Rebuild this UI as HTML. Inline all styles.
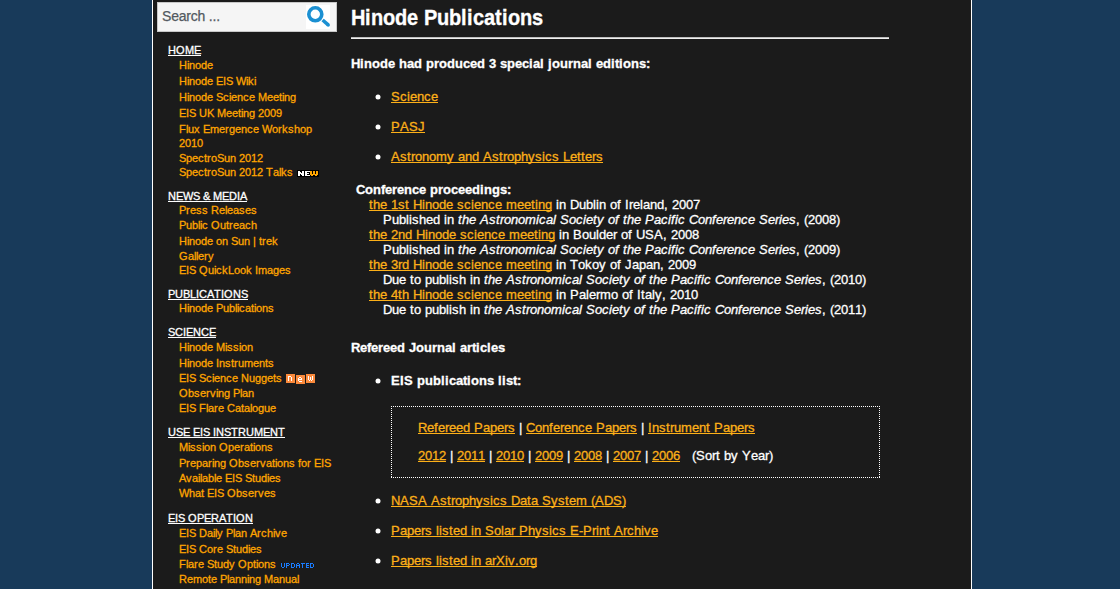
<!DOCTYPE html>
<html><head><meta charset="utf-8">
<title>Hinode Publications</title>
<style>
html,body{margin:0;padding:0;}
body{width:1120px;height:589px;overflow:hidden;background:#183a5a;position:relative;font-family:"Liberation Sans",sans-serif;}
#wrap{position:absolute;left:152px;top:0;width:818px;height:589px;background:#1b1b1b;border-left:1px solid #fff;border-right:1px solid #fff;}
.abs{position:absolute;}
#search{position:absolute;left:157px;top:2px;width:178px;height:28px;background:#f5f5f5;border:1px solid #c8c8c8;}
#search .ph{position:absolute;left:4px;top:5px;font-size:14px;color:#525960;line-height:16px;white-space:nowrap;letter-spacing:-0.2px;-webkit-text-stroke:0.25px #525960;}
#sicon{position:absolute;left:148px;top:2px;width:24px;height:24px;background:#fff;}
.bul{position:absolute;width:6px;height:6px;border-radius:50%;background:#fff;left:375px;}
#hr{position:absolute;left:351px;top:37px;width:538px;height:1px;background:#bdbdbd;border-bottom:1px solid #efefef;}
#box{position:absolute;left:391px;top:406px;width:487px;height:70px;border:1px dotted #fff;}
#txt{position:absolute;left:0;top:0;}
#txt text{font-family:"Liberation Sans",sans-serif;white-space:pre;stroke-width:0.3px;}
#txt .b{font-weight:bold;}
#txt .i{font-style:italic;}
</style></head>
<body>
<div id="wrap"></div>
<div id="search"><div class="ph">Search ...</div>
<div id="sicon"><svg width="24" height="24" viewBox="0 0 24 24"><circle cx="9.3" cy="9.3" r="6.5" fill="none" stroke="#1b90d2" stroke-width="3.6"/><line x1="16.6" y1="15.0" x2="22.2" y2="19.9" stroke="#1b90d2" stroke-width="3.5" stroke-linecap="butt"/><circle cx="22.2" cy="19.9" r="1.75" fill="#1b90d2"/></svg></div>
</div>
<div id="hr"></div>

<svg class="abs" style="left:0;top:0" width="1120" height="589"><g fill="#fff"><circle cx="378" cy="97" r="2.5"/><circle cx="378" cy="127" r="2.5"/><circle cx="378" cy="157" r="2.5"/><circle cx="378" cy="381" r="2.5"/><circle cx="378" cy="501" r="2.5"/><circle cx="378" cy="531" r="2.5"/><circle cx="378" cy="561" r="2.5"/></g></svg>
<svg class="abs" style="left:0;top:0" width="1120" height="589"><g stroke="#fff" stroke-width="1" stroke-dasharray="1 1" fill="none">
<line x1="391" y1="406.5" x2="880" y2="406.5"/><line x1="391" y1="477.5" x2="880" y2="477.5"/>
<line x1="391.5" y1="406" x2="391.5" y2="477"/><line x1="879.5" y1="406" x2="879.5" y2="477"/></g></svg>

<svg class="abs" style="left:297px;top:170px" width="22" height="7" viewBox="0 0 22 7">
<rect x="0" y="0" width="22" height="7" fill="#000"/>
<path fill="#fff" d="M1 1h2v1h1v1h1v-2h2v5h-2v-1h-1v-1h-1v2h-2z"/>
<path fill="#fff" d="M8 1h5v1h-3v1h2v1h-2v1h3v1h-5z"/>
<path fill="#ffa500" d="M13 1h2v3h-2zM16 1h2v3h-2zM19 1h2v3h-2zM13 4h8v1h-8zM14 5h2v1h-2zM18 5h2v1h-2z"/>
</svg>
<svg class="abs" style="left:286px;top:374px" width="29" height="10" viewBox="0 0 29 10">
<g fill="#fb8a3c"><rect x="0" y="0" width="9" height="9"/><rect x="10" y="1" width="9" height="9"/><rect x="20" y="0" width="9" height="9"/></g>
<g fill="#fff">
<rect x="2" y="2" width="3" height="1"/><rect x="2" y="3" width="1" height="4"/><rect x="5" y="3" width="1" height="4"/>
<rect x="13" y="3" width="2" height="1"/><rect x="12" y="4" width="1" height="1"/><rect x="15" y="4" width="1" height="1"/><rect x="12" y="5" width="4" height="1"/><rect x="12" y="6" width="1" height="1"/><rect x="13" y="7" width="3" height="1"/>
<rect x="22" y="2" width="1" height="4"/><rect x="26" y="2" width="1" height="4"/><rect x="24" y="3" width="1" height="3"/><rect x="23" y="6" width="1" height="1"/><rect x="25" y="6" width="1" height="1"/>
</g></svg>
<svg class="abs" style="left:281px;top:563px" width="33" height="5" viewBox="0 0 33 5">
<g fill="#1a7cff">
<path d="M0 0h1v4h-1zM3 0h1v4h-1zM1 4h2v1h-2z"/>
<path d="M5 0h3v1h-2v1h2v1h-2v2h-1zM8 1h1v1h-1z"/>
<path d="M10 0h3v1h-2v3h2v1h-3zM13 1h1v3h-1z"/>
<path d="M16 0h2v1h-2zM15 1h1v4h-1zM18 1h1v4h-1zM16 2h2v1h-2z"/>
<path d="M20 0h4v1h-4zM21 1h1v4h-1z"/>
<path d="M25 0h3v1h-2v1h2v1h-2v1h2v1h-3z"/>
<path d="M29 0h3v1h-2v3h2v1h-3zM32 1h1v3h-1z"/>
</g></svg>
<svg id="txt" width="1120" height="589" viewBox="0 0 1120 589">
<rect x="168" y="55" width="33" height="1" fill="#ffffff"/>
<rect x="168" y="201" width="79" height="1" fill="#ffffff"/>
<rect x="168" y="299" width="80" height="1" fill="#ffffff"/>
<rect x="168" y="337" width="48" height="1" fill="#ffffff"/>
<rect x="168" y="437" width="117" height="1" fill="#ffffff"/>
<rect x="168" y="523" width="85" height="1" fill="#ffffff"/>
<rect x="391" y="102" width="47" height="1" fill="#fcb018"/>
<rect x="391" y="132" width="34" height="1" fill="#fcb018"/>
<rect x="391" y="162" width="212" height="1" fill="#fcb018"/>
<rect x="369" y="210" width="183" height="1" fill="#fcb018"/>
<rect x="369" y="240" width="186" height="1" fill="#fcb018"/>
<rect x="369" y="270" width="183" height="1" fill="#fcb018"/>
<rect x="369" y="300" width="183" height="1" fill="#fcb018"/>
<rect x="418" y="433" width="97" height="1" fill="#fcb018"/>
<rect x="526" y="433" width="111" height="1" fill="#fcb018"/>
<rect x="648" y="433" width="107" height="1" fill="#fcb018"/>
<rect x="418" y="461" width="28" height="1" fill="#fcb018"/>
<rect x="457" y="461" width="28" height="1" fill="#fcb018"/>
<rect x="496" y="461" width="28" height="1" fill="#fcb018"/>
<rect x="535" y="461" width="28" height="1" fill="#fcb018"/>
<rect x="574" y="461" width="28" height="1" fill="#fcb018"/>
<rect x="613" y="461" width="28" height="1" fill="#fcb018"/>
<rect x="652" y="461" width="28" height="1" fill="#fcb018"/>
<rect x="391" y="506" width="235" height="1" fill="#fcb018"/>
<rect x="391" y="536" width="267" height="1" fill="#fcb018"/>
<rect x="391" y="566" width="146" height="1" fill="#fcb018"/>
<text class="r" x="168 176 185 194" y="54" font-size="11" fill="#ffffff" stroke="#ffffff">HOME</text>
<text class="r" x="179 187 189 195 201 207" y="69" font-size="11" fill="#ffa500" stroke="#ffa500">Hinode</text>
<text class="r" x="179 187 189 195 201 207 213 216 223 226 233 236 246 248 254" y="85" font-size="11" fill="#ffa500" stroke="#ffa500">Hinode&#160;EIS&#160;Wiki</text>
<text class="r" x="179 187 189 195 201 207 213 216 223 229 231 237 243 249 255 258 267 273 279 282 284 290" y="101" font-size="11" fill="#ffa500" stroke="#ffa500">Hinode&#160;Science&#160;Meeting</text>
<text class="r" x="179 186 189 196 199 207 214 217 226 232 238 241 243 249 255 258 264 270 276" y="117" font-size="11" fill="#ffa500" stroke="#ffa500">EIS&#160;UK&#160;Meeting&#160;2009</text>
<text class="r" x="179 186 188 194 200 203 210 219 225 229 235 241 247 253 259 262 272 278 282 288 294 300 306" y="133" font-size="11" fill="#ffa500" stroke="#ffa500">Flux&#160;Emergence&#160;Workshop</text>
<text class="r" x="179 185 191 197" y="147" font-size="11" fill="#ffa500" stroke="#ffa500">2010</text>
<text class="r" x="179 186 192 198 204 207 211 217 224 230 236 239 245 251 257" y="162" font-size="11" fill="#ffa500" stroke="#ffa500">SpectroSun&#160;2012</text>
<text class="r" x="179 186 192 198 204 207 211 217 224 230 236 239 245 251 257 263 266 273 279 281 287" y="176" font-size="11" fill="#ffa500" stroke="#ffa500">SpectroSun&#160;2012&#160;Talks</text>
<text class="r" x="168 176 183 193 200 203 210 213 222 229 237 240" y="200" font-size="11" fill="#ffffff" stroke="#ffffff">NEWS&#160;&amp;&#160;MEDIA</text>
<text class="r" x="179 186 190 196 202 208 211 219 225 227 233 239 245 251" y="214" font-size="11" fill="#ffa500" stroke="#ffa500">Press&#160;Releases</text>
<text class="r" x="179 186 192 198 200 202 208 211 220 226 229 233 239 245 251" y="229" font-size="11" fill="#ffa500" stroke="#ffa500">Public&#160;Outreach</text>
<text class="r" x="179 187 189 195 201 207 213 216 222 228 231 238 244 250 253 256 259 262 266 272" y="245" font-size="11" fill="#ffa500" stroke="#ffa500">Hinode&#160;on&#160;Sun&#160;|&#160;trek</text>
<text class="r" x="179 188 194 196 198 204 208" y="260" font-size="11" fill="#ffa500" stroke="#ffa500">Gallery</text>
<text class="r" x="179 186 189 196 199 208 214 216 222 228 234 240 246 252 255 258 267 273 279 285" y="274" font-size="11" fill="#ffa500" stroke="#ffa500">EIS&#160;QuickLook&#160;Images</text>
<text class="r" x="168 175 183 190 196 199 207 214 221 224 233 241" y="298" font-size="11" fill="#ffffff" stroke="#ffffff">PUBLICATIONS</text>
<text class="r" x="179 187 189 195 201 207 213 216 223 229 235 237 239 245 251 254 256 262 268" y="312" font-size="11" fill="#ffa500" stroke="#ffa500">Hinode&#160;Publications</text>
<text class="r" x="168 175 183 186 193 201 209" y="336" font-size="11" fill="#ffffff" stroke="#ffffff">SCIENCE</text>
<text class="r" x="179 187 189 195 201 207 213 216 225 227 233 239 241 247" y="351" font-size="11" fill="#ffa500" stroke="#ffa500">Hinode&#160;Mission</text>
<text class="r" x="179 187 189 195 201 207 213 216 219 225 231 234 238 244 253 259 265 268" y="367" font-size="11" fill="#ffa500" stroke="#ffa500">Hinode&#160;Instruments</text>
<text class="r" x="179 186 189 196 199 206 212 214 220 226 232 238 241 249 255 261 267 273 276" y="382" font-size="11" fill="#ffa500" stroke="#ffa500">EIS&#160;Science&#160;Nuggets</text>
<text class="r" x="179 188 194 200 206 210 216 218 224 230 233 240 242 248" y="397" font-size="11" fill="#ffa500" stroke="#ffa500">Observing&#160;Plan</text>
<text class="r" x="179 186 189 196 199 206 208 214 218 224 227 235 241 244 250 252 258 264 270" y="412" font-size="11" fill="#ffa500" stroke="#ffa500">EIS&#160;Flare&#160;Catalogue</text>
<text class="r" x="168 176 183 190 193 200 203 210 213 216 224 231 238 246 254 263 270 278" y="436" font-size="11" fill="#ffffff" stroke="#ffffff">USE&#160;EIS&#160;INSTRUMENT</text>
<text class="r" x="179 188 190 196 202 204 210 216 219 228 234 240 244 250 253 255 261 267" y="451" font-size="11" fill="#ffa500" stroke="#ffa500">Mission&#160;Operations</text>
<text class="r" x="179 186 190 196 202 208 212 214 220 226 229 238 244 250 256 260 266 272 275 277 283 289 295 298 301 307 311 314 321 324" y="467" font-size="11" fill="#ffa500" stroke="#ffa500">Preparing&#160;Observations&#160;for&#160;EIS</text>
<text class="r" x="179 186 192 198 200 202 208 214 216 222 225 232 235 242 245 252 255 261 267 269 275" y="482" font-size="11" fill="#ffa500" stroke="#ffa500">Available&#160;EIS&#160;Studies</text>
<text class="r" x="179 189 195 201 204 207 214 217 224 227 236 242 248 254 258 264 270" y="497" font-size="11" fill="#ffa500" stroke="#ffa500">What&#160;EIS&#160;Observes</text>
<text class="r" x="168 175 178 185 188 197 204 211 219 226 233 236 245" y="522" font-size="11" fill="#ffffff" stroke="#ffffff">EIS&#160;OPERATION</text>
<text class="r" x="179 186 189 196 199 207 213 215 217 223 226 233 235 241 247 250 257 261 267 273 275 281" y="537" font-size="11" fill="#ffa500" stroke="#ffa500">EIS&#160;Daily&#160;Plan&#160;Archive</text>
<text class="r" x="179 186 189 196 199 207 213 217 223 226 233 236 242 248 250 256" y="553" font-size="11" fill="#ffa500" stroke="#ffa500">EIS&#160;Core&#160;Studies</text>
<text class="r" x="179 186 188 194 198 204 207 214 217 223 229 235 238 247 253 256 258 264 270" y="568" font-size="11" fill="#ffa500" stroke="#ffa500">Flare&#160;Study&#160;Options</text>
<text class="r" x="179 187 193 202 208 211 217 220 227 229 235 241 247 249 255 261 264 273 279 285 291 297" y="583" font-size="11" fill="#ffa500" stroke="#ffa500">Remote&#160;Planning&#160;Manual</text>
<text class="b" x="351 365 371 383 395 407 418 424 437 449 461 467 473 484 495 502 508 520 532" y="25" font-size="20" fill="#ffffff" stroke="#ffffff" transform="matrix(1 0 0 1.07 0 -1.75)">Hinode&#160;Publications</text>
<text class="b" x="351 360 364 372 380 388 395 399 407 414 422 426 434 439 447 455 463 470 477 485 489 496 500 507 515 522 529 533 540 544 548 552 560 568 573 581 588 592 596 603 611 615 619 623 631 639 646" y="68" font-size="13" fill="#ffffff" stroke="#ffffff">Hinode&#160;had&#160;produced&#160;3&#160;special&#160;journal&#160;editions:</text>
<text class="r" x="391 400 407 410 417 424 431" y="101" font-size="13" fill="#fcb018" stroke="#fcb018">Science</text>
<text class="r" x="391 400 409 418" y="131" font-size="13" fill="#fcb018" stroke="#fcb018">PASJ</text>
<text class="r" x="391 400 407 411 415 422 429 436 447 454 458 465 472 479 483 492 499 503 507 514 521 528 535 542 545 552 559 563 570 577 581 585 592 596" y="161" font-size="13" fill="#fcb018" stroke="#fcb018">Astronomy&#160;and&#160;Astrophysics&#160;Letters</text>
<text class="b" x="356 365 373 381 385 392 397 404 412 419 426 430 438 443 451 458 465 472 480 484 492 500 507" y="194" font-size="13" fill="#ffffff" stroke="#ffffff">Conference&#160;proceedings:</text>
<text class="r" x="369 373 380 387 391 398 405 409 413 422 425 432 439 446 453 457 464 471 474 481 488 495 502 506 517 524 531 535 538 545" y="209" font-size="13" fill="#fcb018" stroke="#fcb018">the&#160;1st&#160;Hinode&#160;science&#160;meeting</text>
<text class="r" x="552 556 559 566 570 579 586 593 596 599 606 610 617 621 625 629 633 640 643 650 657 664 668 672 679 686 693" y="209" font-size="13" fill="#ffffff" stroke="#ffffff">&#160;in&#160;Dublin&#160;of&#160;Ireland,&#160;2007</text>
<text class="r" x="383 392 399 406 409 412 419 426 433 440 444 447 454" y="224" font-size="13" fill="#ffffff" stroke="#ffffff">Published&#160;in&#160;</text>
<text class="i" x="458 462 469 476 480 489 496 500 504 511 518 525 536 539 546 553 556 560 569 576 583 586 593 597 604 608 615 619 623 627 634 641 645 654 661 668 671 675 678 685 689 698 705 712 716 723 727 734 741 748 755 759 768 775 779 782 789" y="224" font-size="13" fill="#ffffff" stroke="#ffffff">the&#160;Astronomical&#160;Society&#160;of&#160;the&#160;Pacific&#160;Conference&#160;Series</text>
<text class="r" x="796 800 804 808 815 822 829 836" y="224" font-size="13" fill="#ffffff" stroke="#ffffff">,&#160;(2008)</text>
<text class="r" x="369 373 380 387 391 398 405 412 416 425 428 435 442 449 456 460 467 474 477 484 491 498 505 509 520 527 534 538 541 548" y="239" font-size="13" fill="#fcb018" stroke="#fcb018">the&#160;2nd&#160;Hinode&#160;science&#160;meeting</text>
<text class="r" x="555 559 562 569 573 582 589 596 599 606 613 617 621 628 632 636 645 654 663 667 671 678 685 692" y="239" font-size="13" fill="#ffffff" stroke="#ffffff">&#160;in&#160;Boulder&#160;of&#160;USA,&#160;2008</text>
<text class="r" x="383 392 399 406 409 412 419 426 433 440 444 447 454" y="254" font-size="13" fill="#ffffff" stroke="#ffffff">Published&#160;in&#160;</text>
<text class="i" x="458 462 469 476 480 489 496 500 504 511 518 525 536 539 546 553 556 560 569 576 583 586 593 597 604 608 615 619 623 627 634 641 645 654 661 668 671 675 678 685 689 698 705 712 716 723 727 734 741 748 755 759 768 775 779 782 789" y="254" font-size="13" fill="#ffffff" stroke="#ffffff">the&#160;Astronomical&#160;Society&#160;of&#160;the&#160;Pacific&#160;Conference&#160;Series</text>
<text class="r" x="796 800 804 808 815 822 829 836" y="254" font-size="13" fill="#ffffff" stroke="#ffffff">,&#160;(2009)</text>
<text class="r" x="369 373 380 387 391 398 402 409 413 422 425 432 439 446 453 457 464 471 474 481 488 495 502 506 517 524 531 535 538 545" y="269" font-size="13" fill="#fcb018" stroke="#fcb018">the&#160;3rd&#160;Hinode&#160;science&#160;meeting</text>
<text class="r" x="552 556 559 566 570 578 585 592 599 606 610 617 621 625 632 639 646 653 660 664 668 675 682 689" y="269" font-size="13" fill="#ffffff" stroke="#ffffff">&#160;in&#160;Tokoy&#160;of&#160;Japan,&#160;2009</text>
<text class="r" x="383 392 399 406 410 414 421 425 432 439 446 449 452 459 466 470 473 480" y="284" font-size="13" fill="#ffffff" stroke="#ffffff">Due&#160;to&#160;publish&#160;in&#160;</text>
<text class="i" x="484 488 495 502 506 515 522 526 530 537 544 551 562 565 572 579 582 586 595 602 609 612 619 623 630 634 641 645 649 653 660 667 671 680 687 694 697 701 704 711 715 724 731 738 742 749 753 760 767 774 781 785 794 801 805 808 815" y="284" font-size="13" fill="#ffffff" stroke="#ffffff">the&#160;Astronomical&#160;Society&#160;of&#160;the&#160;Pacific&#160;Conference&#160;Series</text>
<text class="r" x="822 826 830 834 841 848 855 862" y="284" font-size="13" fill="#ffffff" stroke="#ffffff">,&#160;(2010)</text>
<text class="r" x="369 373 380 387 391 398 402 409 413 422 425 432 439 446 453 457 464 471 474 481 488 495 502 506 517 524 531 535 538 545" y="299" font-size="13" fill="#fcb018" stroke="#fcb018">the&#160;4th&#160;Hinode&#160;science&#160;meeting</text>
<text class="r" x="552 556 559 566 570 579 586 589 596 600 611 618 622 629 633 637 641 645 652 655 662 666 670 677 684 691" y="299" font-size="13" fill="#ffffff" stroke="#ffffff">&#160;in&#160;Palermo&#160;of&#160;Italy,&#160;2010</text>
<text class="r" x="383 392 399 406 410 414 421 425 432 439 446 449 452 459 466 470 473 480" y="314" font-size="13" fill="#ffffff" stroke="#ffffff">Due&#160;to&#160;publish&#160;in&#160;</text>
<text class="i" x="484 488 495 502 506 515 522 526 530 537 544 551 562 565 572 579 582 586 595 602 609 612 619 623 630 634 641 645 649 653 660 667 671 680 687 694 697 701 704 711 715 724 731 738 742 749 753 760 767 774 781 785 794 801 805 808 815" y="314" font-size="13" fill="#ffffff" stroke="#ffffff">the&#160;Astronomical&#160;Society&#160;of&#160;the&#160;Pacific&#160;Conference&#160;Series</text>
<text class="r" x="822 826 830 834 841 848 855 862" y="314" font-size="13" fill="#ffffff" stroke="#ffffff">,&#160;(2011)</text>
<text class="b" x="351 360 367 371 378 383 390 397 405 409 416 424 432 437 445 452 456 460 467 472 476 480 487 491 498" y="352" font-size="13" fill="#ffffff" stroke="#ffffff">Refereed&#160;Journal&#160;articles</text>
<text class="b" x="391 400 404 413 417 425 433 441 445 449 456 463 467 471 479 487 494 498 502 506 513 517" y="385" font-size="13" fill="#ffffff" stroke="#ffffff">EIS&#160;publications&#160;list:</text>
<text class="r" x="418 427 434 438 445 449 456 463 470 474 483 490 497 504 508" y="432" font-size="13" fill="#fcb018" stroke="#fcb018">Refereed&#160;Papers</text>
<text class="r" x="515 519 522" y="432" font-size="13" fill="#ffffff" stroke="#ffffff">&#160;|&#160;</text>
<text class="r" x="526 535 542 549 553 560 564 571 578 585 592 596 605 612 619 626 630" y="432" font-size="13" fill="#fcb018" stroke="#fcb018">Conference&#160;Papers</text>
<text class="r" x="637 641 644" y="432" font-size="13" fill="#ffffff" stroke="#ffffff">&#160;|&#160;</text>
<text class="r" x="648 652 659 666 670 674 681 692 699 706 710 714 723 730 737 744 748" y="432" font-size="13" fill="#fcb018" stroke="#fcb018">Instrument&#160;Papers</text>
<text class="r" x="418 425 432 439" y="460" font-size="13" fill="#fcb018" stroke="#fcb018">2012</text>
<text class="r" x="446 450 453" y="460" font-size="13" fill="#ffffff" stroke="#ffffff">&#160;|&#160;</text>
<text class="r" x="457 464 471 478" y="460" font-size="13" fill="#fcb018" stroke="#fcb018">2011</text>
<text class="r" x="485 489 492" y="460" font-size="13" fill="#ffffff" stroke="#ffffff">&#160;|&#160;</text>
<text class="r" x="496 503 510 517" y="460" font-size="13" fill="#fcb018" stroke="#fcb018">2010</text>
<text class="r" x="524 528 531" y="460" font-size="13" fill="#ffffff" stroke="#ffffff">&#160;|&#160;</text>
<text class="r" x="535 542 549 556" y="460" font-size="13" fill="#fcb018" stroke="#fcb018">2009</text>
<text class="r" x="563 567 570" y="460" font-size="13" fill="#ffffff" stroke="#ffffff">&#160;|&#160;</text>
<text class="r" x="574 581 588 595" y="460" font-size="13" fill="#fcb018" stroke="#fcb018">2008</text>
<text class="r" x="602 606 609" y="460" font-size="13" fill="#ffffff" stroke="#ffffff">&#160;|&#160;</text>
<text class="r" x="613 620 627 634" y="460" font-size="13" fill="#fcb018" stroke="#fcb018">2007</text>
<text class="r" x="641 645 648" y="460" font-size="13" fill="#ffffff" stroke="#ffffff">&#160;|&#160;</text>
<text class="r" x="652 659 666 673" y="460" font-size="13" fill="#fcb018" stroke="#fcb018">2006</text>
<text class="r" x="680 684 688 692 696 705 712 716 720 724 731 738 742 751 758 765 769" y="460" font-size="13" fill="#ffffff" stroke="#ffffff">&#160;&#160;&#160;(Sort&#160;by&#160;Year)</text>
<text class="r" x="391 400 409 418 427 431 440 447 451 455 462 469 476 483 490 493 500 507 511 520 527 531 538 542 551 558 565 569 576 587 591 595 604 613 622" y="505" font-size="13" fill="#fcb018" stroke="#fcb018">NASA&#160;Astrophysics&#160;Data&#160;System&#160;(ADS)</text>
<text class="r" x="391 400 407 414 421 425 432 436 439 442 449 453 460 467 471 474 481 485 494 501 504 511 515 519 528 535 542 549 552 559 566 570 579 583 592 596 599 606 610 614 623 627 634 641 644 651" y="535" font-size="13" fill="#fcb018" stroke="#fcb018">Papers&#160;listed&#160;in&#160;Solar&#160;Physics&#160;E-Print&#160;Archive</text>
<text class="r" x="391 400 407 414 421 425 432 436 439 442 449 453 460 467 471 474 481 485 492 496 505 508 515 519 526 530" y="565" font-size="13" fill="#fcb018" stroke="#fcb018">Papers&#160;listed&#160;in&#160;arXiv.org</text>
</svg>
</body></html>
